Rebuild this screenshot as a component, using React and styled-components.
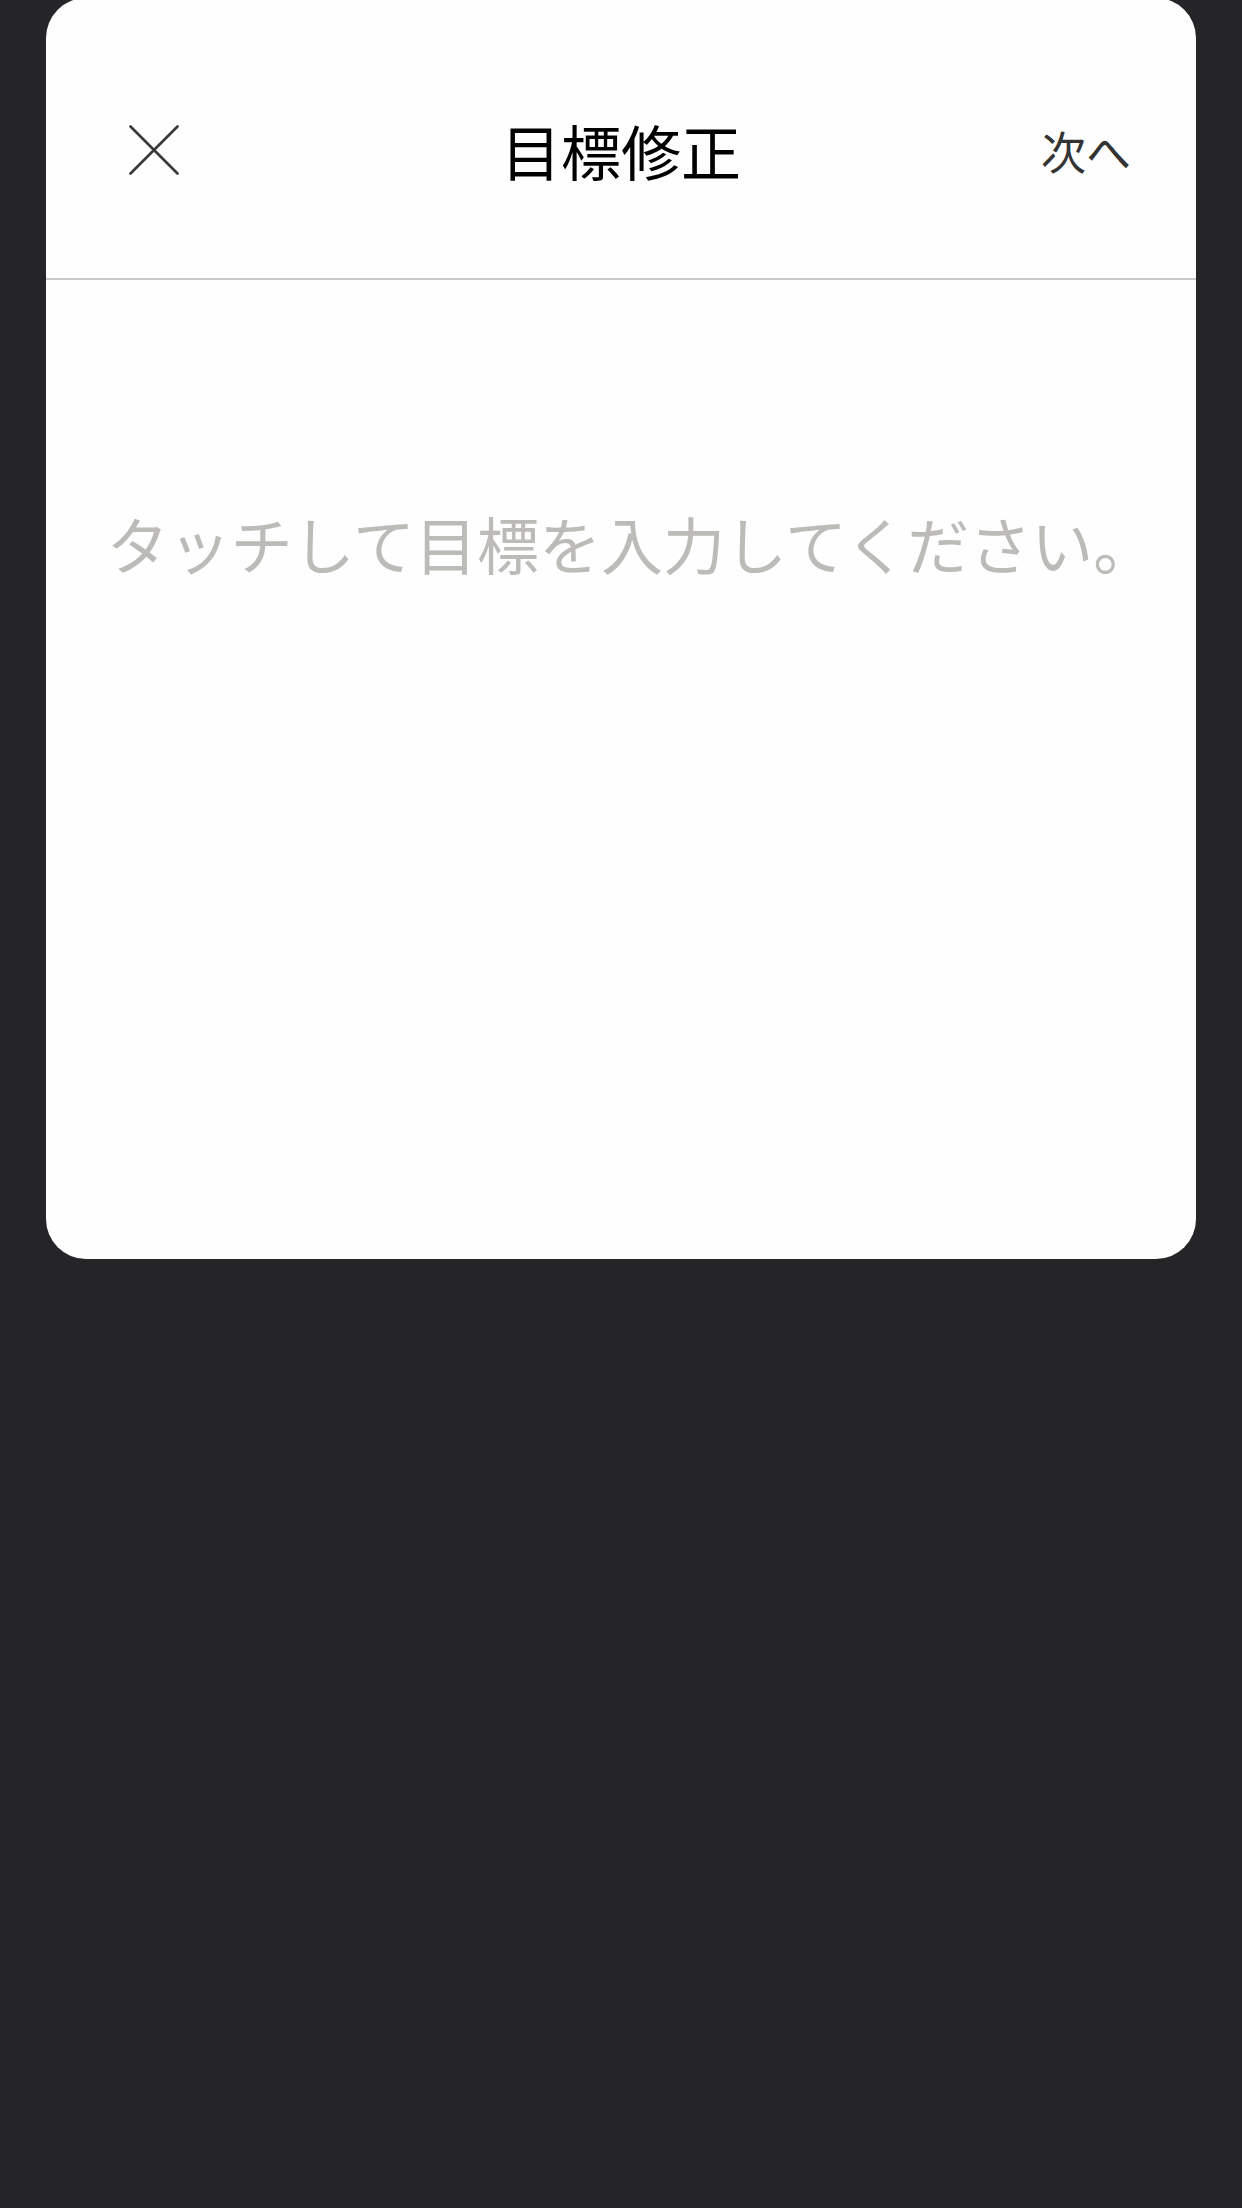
import React from 'react';
import styled, { createGlobalStyle } from 'styled-components';

const GlobalStyle = createGlobalStyle`
  html, body {
    margin: 0;
    padding: 0;
    background: #252527;
  }
  body {
    font-family: "Noto Sans CJK JP", "Noto Sans", sans-serif;
  }
`;

const Page = styled.div`
  min-height: 2208px;
  padding: 0 46px;
  box-sizing: border-box;
  overflow: hidden;
`;

const Card = styled.div`
  margin-top: -2px;
  height: 1261px;
  background: #fefefe;
  border-radius: 40px;
  display: flex;
  flex-direction: column;
  overflow: hidden;
`;

const Header = styled.div`
  height: 282px;
  box-sizing: border-box;
  padding: 24px 65px 0;
  border-bottom: 2px solid #cacaca;
  display: grid;
  grid-template-columns: 1fr auto 1fr;
  align-items: center;
`;

const CloseButton = styled.button`
  justify-self: start;
  margin-left: 18px;
  width: 50px;
  height: 50px;
  padding: 0;
  border: none;
  background: none;
  display: flex;
  color: #383838;
`;

const Title = styled.h1`
  margin: 0;
  font-size: 60px;
  font-weight: 400;
  line-height: 1;
  color: #000;
`;

const NextButton = styled.button`
  justify-self: end;
  padding: 0;
  border: none;
  background: none;
  font-family: inherit;
  font-size: 45px;
  line-height: 1;
  color: #333;
`;

const Body = styled.div`
  flex: 1;
  padding: 232px 0 0 20px;
  display: flex;
  justify-content: center;
`;

const Placeholder = styled.p`
  margin: 0;
  font-size: 62px;
  line-height: 62px;
  font-weight: 400;
  color: #bcbbb7;
  white-space: nowrap;
`;

function CloseIcon() {
  return (
    <svg width="50" height="50" viewBox="0 0 50 50" fill="none">
      <path
        d="M1.5 1.5 L48.5 48.5 M48.5 1.5 L1.5 48.5"
        stroke="currentColor"
        strokeWidth="2.6"
        strokeLinecap="round"
      />
    </svg>
  );
}

function App() {
  return (
    <Page>
      <GlobalStyle />
      <Card>
        <Header>
          <CloseButton aria-label="閉じる">
            <CloseIcon />
          </CloseButton>
          <Title>目標修正</Title>
          <NextButton>次へ</NextButton>
        </Header>
        <Body>
          <Placeholder>タッチして目標を入力してください。</Placeholder>
        </Body>
      </Card>
    </Page>
  );
}

export default App;
